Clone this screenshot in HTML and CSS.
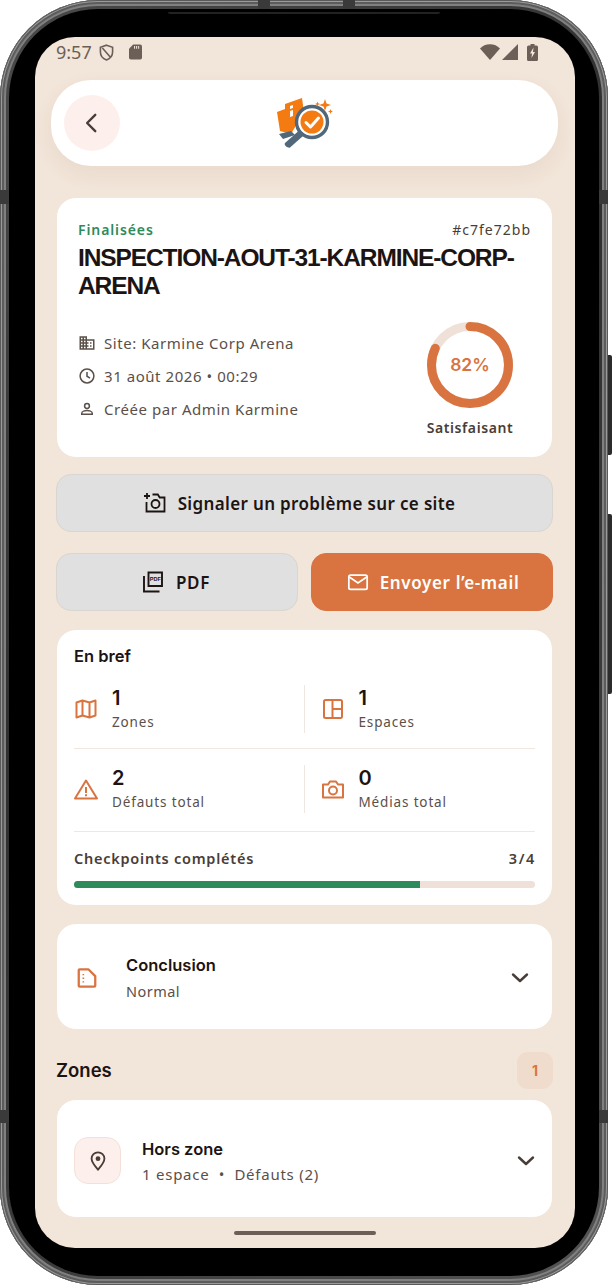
FILE: index.html
```html
<!DOCTYPE html>
<html lang="fr">
<head>
<meta charset="utf-8">
<title>Inspection</title>
<link rel="stylesheet" href="styles.css">
</head>
<body>
<div class="phone">
  <span class="seam seam-t1"></span><span class="seam seam-t2"></span>
  <span class="seam seam-l1"></span><span class="seam seam-l2"></span>
  <span class="seam seam-r1"></span><span class="seam seam-r2"></span>
  <span class="side side-1"></span><span class="side side-2"></span>
  <div class="bezel">
    <span class="speaker"></span>
    <div class="screen">
      <div class="status">
        <span class="time">9:57</span>
        <svg class="st-shield" viewBox="0 0 16 18"><path d="M8 1.2 14.5 3.4V8.5C14.5 12.6 11.8 15.6 8 16.9 4.2 15.6 1.5 12.6 1.5 8.5V3.4Z M3.6 4.2 12.2 14" fill="none" stroke="#6b5f57" stroke-width="1.7"/></svg>
        <svg class="st-sd" viewBox="0 0 14 16"><path d="M4.5 0H12a2 2 0 0 1 2 2v12a2 2 0 0 1-2 2H2a2 2 0 0 1-2-2V4.5Z" fill="#6b5f57"/><path d="M6 1.5v3M8.2 1.5v3M10.4 1.5v3" stroke="#f2e5d9" stroke-width="1.1"/></svg>
        <span class="st-gap"></span>
        <svg class="st-wifi" viewBox="0 0 20 16"><path d="M10 16 0 4.5C2.6 1.8 6 .3 10 .3S17.4 1.8 20 4.5Z" fill="#6b5f57"/></svg>
        <svg class="st-signal" viewBox="0 0 16 16"><path d="M16 0V16H0Z" fill="#6b5f57"/></svg>
        <svg class="st-batt" viewBox="0 0 11 17"><path d="M3.5 0h4v1.5h2A1.5 1.5 0 0 1 11 3v12.5A1.5 1.5 0 0 1 9.500 17h-8A1.500 1.500 0 0 1 0 15.500V3a1.500 1.500 0 0 1 1.500-1.500h2Z" fill="#6b5f57"/><path d="M6.500 3.500 3 9.500h2L4.500 14 8 8H6Z" fill="#f2e5d9"/></svg>
      </div>

      <header class="topbar">
        <button class="back">
          <svg viewBox="0 0 24 24" class="back-ic"><path d="M15 4.500 7.500 12l7.500 7.500" fill="none" stroke="#4a3d38" stroke-width="2.200" stroke-linecap="round" stroke-linejoin="round"/></svg>
        </button>
        <svg class="logo" viewBox="0 0 58 50">
          <path d="M0 14 8 11V6L25 0 27 14 14 36 3 33Z" fill="#f47a12"/>
          <path d="M13 8 16 7V10L13 11Z M13 13 16 12V18L13 19Z" fill="#fff"/>
          <path d="M2 36 14 33 18 37 6 41Z" fill="#50687a"/>
          <path d="M8 45 21 33.500 26 38 13 49.500C11 50.500 6.500 47.500 8 45Z" fill="#50687a"/>
          <circle cx="35" cy="24" r="15.500" fill="#fff" stroke="#50687a" stroke-width="3.400"/>
          <circle cx="35" cy="24" r="11.500" fill="#f47a12"/>
          <path d="M29 24.500 33.500 29 41.500 20" fill="none" stroke="#fff" stroke-width="3" stroke-linecap="round" stroke-linejoin="round"/>
          <path d="M48 1 49.500 5.500 54 7 49.500 8.500 48 13 46.500 8.500 42 7 46.500 5.500Z M40.500 3.500 41.200 5.300 43 6 41.200 6.700 40.500 8.500 39.800 6.700 38 6 39.800 5.300Z M53.500 11 54.200 12.800 56 13.500 54.200 14.200 53.500 16 52.800 14.200 51 13.500 52.800 12.800Z" fill="#f47a12"/>
        </svg>
      </header>

      <main class="content">
        <section class="card summary">
          <div class="sum-top">
            <span class="state">Finalisées</span>
            <span class="hash">#c7fe72bb</span>
          </div>
          <h1 class="title">INSPECTION-AOUT-31-KARMINE-CORP-ARENA</h1>
          <div class="sum-body">
            <ul class="meta">
              <li>
                <svg viewBox="0 0 24 24" class="m-ic"><path d="M12 7V3H2v18h20V7H12zM6 19H4v-2h2v2zm0-4H4v-2h2v2zm0-4H4V9h2v2zm0-4H4V5h2v2zm4 12H8v-2h2v2zm0-4H8v-2h2v2zm0-4H8V9h2v2zm0-4H8V5h2v2zm10 12h-8v-2h2v-2h-2v-2h2v-2h-2V9h8v10zm-2-8h-2v2h2v-2zm0 4h-2v2h2v-2z" fill="#5b4f4a"/></svg>
                <span>Site: Karmine Corp Arena</span>
              </li>
              <li>
                <svg viewBox="0 0 24 24" class="m-ic"><circle cx="12" cy="12" r="9.200" fill="none" stroke="#5b4f4a" stroke-width="2"/><path d="M12 6.500V12.300L16 14.700" fill="none" stroke="#5b4f4a" stroke-width="2"/></svg>
                <span>31 août 2026 • 00:29</span>
              </li>
              <li>
                <svg viewBox="0 0 24 24" class="m-ic"><circle cx="12" cy="8" r="3.200" fill="none" stroke="#5b4f4a" stroke-width="2"/><path d="M5 19v-1.500c0-2.400 4.500-3.500 7-3.500s7 1.100 7 3.500V19Z" fill="none" stroke="#5b4f4a" stroke-width="2"/></svg>
                <span>Créée par Admin Karmine</span>
              </li>
            </ul>
            <div class="score">
              <svg viewBox="0 0 88 88" class="donut">
                <circle cx="44" cy="44" r="38.500" fill="none" stroke="#efe0d8" stroke-width="9"/>
                <circle cx="44" cy="44" r="38.500" fill="none" stroke="#d97441" stroke-width="9" stroke-linecap="round" stroke-dasharray="198.400 241.900" transform="rotate(-90 44 44)"/>
                <text x="44" y="50" text-anchor="middle" class="donut-t">82%</text>
              </svg>
              <span class="score-l">Satisfaisant</span>
            </div>
          </div>
        </section>

        <button class="btn btn-wide">
          <svg viewBox="0 0 24 24" class="b-ic"><path d="M4 2v6M1 5h6M3.500 11v9.500h18V6.500h-4.800L14.800 3.500H9.500" fill="none" stroke="#1c1412" stroke-width="1.800"/><circle cx="12.500" cy="13" r="4" fill="none" stroke="#1c1412" stroke-width="1.800"/></svg>
          <span>Signaler un problème sur ce site</span>
        </button>

        <div class="btn-row">
          <button class="btn btn-pdf">
            <svg viewBox="0 0 24 24" class="b-ic"><path d="M7.500 2.500h13.500v13.500H7.500Z M3 6v15.500h15.500" fill="none" stroke="#1c1412" stroke-width="1.900"/><text x="14.300" y="11.200" text-anchor="middle" class="pdf-t">PDF</text></svg>
            <span>PDF</span>
          </button>
          <button class="btn btn-primary">
            <svg viewBox="0 0 24 24" class="b-ic mail-ic"><rect x="2" y="4.500" width="20" height="15.500" rx="1.800" fill="none" stroke="#fff" stroke-width="1.900"/><path d="M2.500 6.500 12 13l9.500-6.500" fill="none" stroke="#fff" stroke-width="1.900"/></svg>
            <span>Envoyer l’e-mail</span>
          </button>
        </div>

        <section class="card brief">
          <h2 class="brief-t">En bref</h2>
          <div class="stats">
            <div class="stat">
              <svg viewBox="0 0 24 24" class="s-ic"><path d="M2.500 5.500 8.500 3.500 15.500 5.500 21.500 3.500V18.500L15.500 20.500 8.500 18.500 2.500 20.500Z M8.500 3.500V18.500M15.500 5.500V20.500" fill="none" stroke="#d97441" stroke-width="2" stroke-linejoin="round"/></svg>
              <div><div class="num">1</div><div class="lab">Zones</div></div>
            </div>
            <div class="stat stat-r">
              <svg viewBox="0 0 24 24" class="s-ic"><rect x="3" y="3" width="18" height="18" rx="1.500" fill="none" stroke="#d97441" stroke-width="2"/><path d="M11.500 3V21M11.500 12H21" fill="none" stroke="#d97441" stroke-width="2"/></svg>
              <div><div class="num">1</div><div class="lab">Espaces</div></div>
            </div>
          </div>
          <hr class="rule">
          <div class="stats">
            <div class="stat">
              <svg viewBox="0 0 24 24" class="s-ic"><path d="M12 3.500 23 21.500H1Z" fill="none" stroke="#d97441" stroke-width="2" stroke-linejoin="round"/><path d="M12 10v6M12 17.200v2" stroke="#d97441" stroke-width="2"/></svg>
              <div><div class="num">2</div><div class="lab">Défauts total</div></div>
            </div>
            <div class="stat stat-r">
              <svg viewBox="0 0 24 24" class="s-ic"><path d="M2 7.500h5L9 4.500h6l2 3h5V20.500H2Z" fill="none" stroke="#d97441" stroke-width="2" stroke-linejoin="round"/><circle cx="12" cy="13.500" r="4" fill="none" stroke="#d97441" stroke-width="2"/></svg>
              <div><div class="num">0</div><div class="lab">Médias total</div></div>
            </div>
          </div>
          <hr class="rule rule-2">
          <div class="cp-head"><span>Checkpoints complétés</span><span class="cp-n">3/4</span></div>
          <div class="track"><div class="fill" style="width:75%"></div></div>
        </section>

        <section class="card row-card concl">
          <svg viewBox="0 0 24 24" class="s-ic concl-ic"><path d="M3 3.500a1 1 0 0 1 1-1h9.500L21 10v10.500a1 1 0 0 1-1 1H4a1 1 0 0 1-1-1Z" fill="none" stroke="#d97441" stroke-width="2.500" stroke-linejoin="round"/><path d="M8 7.500v1.500M8 11.500V13M8 15.500V17" stroke="#d97441" stroke-width="1.800"/></svg>
          <div class="row-text concl-text">
            <div class="row-t">Conclusion</div>
            <div class="row-s">Normal</div>
          </div>
          <svg viewBox="0 0 24 24" class="chev"><path d="M5 8.500 12 15l7-6.500" fill="none" stroke="#4a3d38" stroke-width="2.400" stroke-linecap="round" stroke-linejoin="round"/></svg>
        </section>

        <div class="zones-head">
          <h2 class="zones-t">Zones</h2>
          <span class="badge">1</span>
        </div>

        <section class="card row-card zone">
          <div class="pin-box">
            <svg viewBox="0 0 24 24" class="pin"><path d="M12 2.500c-3.900 0-7 3-7 6.900 0 4.500 4.500 9.200 7 12.100 2.500-2.900 7-7.600 7-12.100 0-3.900-3.100-6.900-7-6.900Z" fill="none" stroke="#4a3d38" stroke-width="2"/><circle cx="12" cy="9.500" r="2.600" fill="#4a3d38"/></svg>
          </div>
          <div class="row-text zone-text">
            <div class="row-t">Hors zone</div>
            <div class="row-s">1 espace &nbsp;•&nbsp; Défauts (2)</div>
          </div>
          <svg viewBox="0 0 24 24" class="chev"><path d="M5 8.500 12 15l7-6.500" fill="none" stroke="#4a3d38" stroke-width="2.400" stroke-linecap="round" stroke-linejoin="round"/></svg>
        </section>
      </main>

      <div class="home"></div>
    </div>
  </div>
</div>
</body>
</html>
```
FILE: styles.css
```css
* { box-sizing: border-box; }
html, body { margin: 0; padding: 0; background: #fff; }
body { width: 612px; height: 1285px; overflow: hidden; font-family: "Noto Sans", sans-serif; color: #1c1412; }

.phone {
  position: relative;
  width: 608px;
  height: 1285px;
  padding: 9px;
  border-radius: 98px;
  background: linear-gradient(135deg, #4a4a4a, #2f2f2f 40%, #3c3c3c 70%, #555);
  box-shadow: inset 0 0 0 1px #5a5a5a, inset 0 0 0 2px #9a9a9a, inset 0 0 0 4px #5c5c5c, inset 0 0 0 6px #808080;
}
.bezel {
  position: relative;
  width: 590px;
  height: 1267px;
  padding: 28px 24px 28px 26px;
  border-radius: 89px;
  background: #000;
}
.speaker { position: absolute; top: 3px; left: 159px; width: 272px; height: 2px; background: #222; border-radius: 0 0 4px 4px; }

.seam { position: absolute; background: #3a3a3a; z-index: 2; }
.seam-t1 { top: 0; left: 258px; width: 12px; height: 9px; }
.seam-t2 { top: 0; left: 343px; width: 12px; height: 9px; }
.seam-l1 { left: 0; top: 190px; width: 9px; height: 14px; }
.seam-l2 { left: 0; top: 1110px; width: 9px; height: 13px; }
.seam-r1 { right: 0; top: 190px; width: 9px; height: 14px; }
.seam-r2 { right: 0; top: 1110px; width: 9px; height: 13px; }
.side { position: absolute; right: -4px; width: 4px; background: #2c2c2c; border-radius: 0 2px 2px 0; }
.side-1 { top: 355px; height: 100px; }
.side-2 { top: 514px; height: 180px; }

.screen {
  position: relative;
  width: 540px;
  height: 1211px;
  overflow: hidden;
  border-radius: 40px;
  background: #f2e5d9;
  display: flex;
  flex-direction: column;
}

.status { display: flex; align-items: center; height: 30px; padding: 0 37px 0 21px; margin-bottom: 13px; }
.time { font-size: 18px; color: #6b5f57; line-height: 30px; margin-right: 7px; }
.st-shield { width: 15px; height: 17px; margin-right: 15px; }
.st-sd { width: 13px; height: 16px; }
.st-gap { flex: 1; }
.st-wifi { width: 20px; height: 16px; margin-right: 2px; }
.st-signal { width: 16px; height: 16px; margin-right: 9px; }
.st-batt { width: 11px; height: 17px; }

.topbar {
  position: relative;
  display: flex;
  align-items: center;
  justify-content: center;
  height: 86px;
  margin: 0 17px 0 16px;
  border-radius: 40px;
  background: #fff;
  box-shadow: 0 8px 20px rgba(130, 90, 50, .08);
}
.back {
  position: absolute;
  left: 13px;
  top: 15px;
  width: 56px;
  height: 56px;
  padding: 0;
  border: 0;
  border-radius: 50%;
  background: #fdf0ec;
  display: flex;
  align-items: center;
  justify-content: center;
}
.back-ic { width: 26px; height: 26px; }
.logo { width: 58px; height: 50px; margin-left: 2px; }

.content { padding: 31px 22px 0 21px; display: flex; flex-direction: column; }
.card { border: 1px solid #f2e5d9; border-radius: 20px; background: #fff; }

.summary { height: 261px; padding: 21px 21px 0; }
.sum-top { display: flex; justify-content: space-between; align-items: center; height: 20px; }
.state { font-size: 14px; font-weight: 600; color: #2e8b5b; letter-spacing: .9px; }
.hash { font-size: 14px; color: #4a3d38; letter-spacing: 1px; }
.title { margin: 5px 0 0; font-family: "Liberation Sans", sans-serif; font-size: 24.500px; line-height: 28px; font-weight: 700; letter-spacing: -1.1px; color: #1c1412; }
.sum-body { display: flex; justify-content: space-between; }
.meta { list-style: none; margin: 32px 0 0; padding: 0; display: flex; flex-direction: column; gap: 11px; }
.meta li { display: flex; align-items: center; gap: 8px; height: 22px; font-size: 15px; color: #5b4f4a; letter-spacing: .55px; }
.m-ic { width: 18px; height: 18px; }
.score { display: flex; flex-direction: column; align-items: center; width: 88px; margin: 21px 17px 0 0; }
.donut { width: 88px; height: 88px; display: block; }
.donut-t { font-family: Inter, sans-serif; font-size: 17.500px; font-weight: 600; fill: #d97441; }
.score-l { font-size: 14px; font-weight: 600; color: #4a3d38; letter-spacing: .6px; margin-top: 9px; white-space: nowrap; }

.btn {
  display: flex;
  align-items: center;
  justify-content: center;
  gap: 11px;
  height: 58px;
  padding: 0;
  border: 1px solid #d9d5d0;
  border-radius: 15px;
  background: #e0e0e0;
  font-family: "Noto Sans", sans-serif;
  font-size: 17px;
  font-weight: 600;
  letter-spacing: .35px;
  color: #1c1412;
}
.btn-wide { margin-top: 16px; padding-right: 11px; }
.btn-row { display: flex; gap: 13px; margin-top: 21px; }
.btn-row .btn { flex: 0 0 242px; }
.btn-pdf { padding-right: 3px; letter-spacing: .6px; }
.btn-primary { background: #d97441; border-color: #d97441; color: #fff; letter-spacing: .65px; padding-left: 2px; }
.b-ic { width: 24px; height: 24px; }
.mail-ic { width: 22px; height: 22px; }
.pdf-t { font-family: "Liberation Sans", sans-serif; font-size: 5.500px; font-weight: 700; letter-spacing: 0; fill: #1c1412; }

.brief { margin-top: 18px; height: 277px; padding: 16px 17px 0; }
.brief-t { margin: 0 0 19px; font-size: 16.500px; line-height: 20px; font-weight: 600; font-family: Inter, sans-serif; color: #1c1412; }
.stats { display: grid; grid-template-columns: 1fr 1fr; height: 48px; }
.stat { display: flex; align-items: center; gap: 14px; }
.stat-r { border-left: 1px solid #f1e7e1; margin-left: -1px; padding-left: 16px; }
.s-ic { width: 24px; height: 24px; flex: none; }
.num { font-family: Inter, sans-serif; font-size: 20px; font-weight: 600; line-height: 24px; color: #1c1412; }
.lab { font-size: 13.500px; line-height: 20px; letter-spacing: .85px; color: #5b4f4a; margin-top: 2px; }
.rule { border: 0; border-top: 1px solid #f1e7e1; margin: 15px 0 16px; }
.rule-2 { margin: 18px 0 0; }
.cp-head { display: flex; justify-content: space-between; margin-top: 16px; font-size: 14.500px; line-height: 20px; font-weight: 600; color: #4a3d38; letter-spacing: .75px; }
.cp-n { letter-spacing: 1.6px; margin-right: -1px; }
.track { height: 7px; margin-top: 13px; border-radius: 4px; background: #efe0d8; overflow: hidden; }
.fill { height: 100%; background: #2e8b5b; }

.row-card { display: flex; align-items: center; }
.row-text { flex: 1; }
.row-t { font-family: Inter, sans-serif; font-size: 16.500px; font-weight: 600; line-height: 20px; color: #1c1412; }
.row-s { font-size: 14.500px; line-height: 20px; letter-spacing: .45px; color: #5b4f4a; margin-top: 7px; }
.chev { width: 24px; height: 24px; flex: none; }

.concl { margin-top: 17px; height: 107px; padding: 2px 20px 0 19px; }
.concl-text { padding-top: 1px; }
.concl-text .row-s { margin-top: 6px; }
.concl-ic { width: 22px; height: 22px; margin-right: 28px; }

.zones-head { display: flex; align-items: center; justify-content: space-between; margin-top: 21px; height: 38px; }
.zones-t { margin: 0; font-family: Inter, sans-serif; font-size: 18.500px; font-weight: 600; color: #1c1412; }
.badge { width: 36px; height: 37px; border-radius: 11px; background: #f0dccd; color: #d97441; font-family: Inter, sans-serif; font-size: 14px; font-weight: 700; display: flex; align-items: center; justify-content: center; }

.zone { margin-top: 10px; height: 119px; padding: 4px 14px 0 17px; }
.zone-text { padding-top: 2px; }
.zone-text .row-t { margin-bottom: -2px; }
.zone-text .row-s { font-size: 15px; letter-spacing: .75px; }
.pin-box { width: 47px; height: 47px; margin-right: 21px; border-radius: 14px; border: 1px solid #f3e1d9; background: #fdf0ec; display: flex; align-items: center; justify-content: center; flex: none; }
.pin { width: 22px; height: 22px; }

.home { position: absolute; left: 199px; bottom: 13px; width: 142px; height: 4px; border-radius: 2px; background: #6b5f57; }
```
